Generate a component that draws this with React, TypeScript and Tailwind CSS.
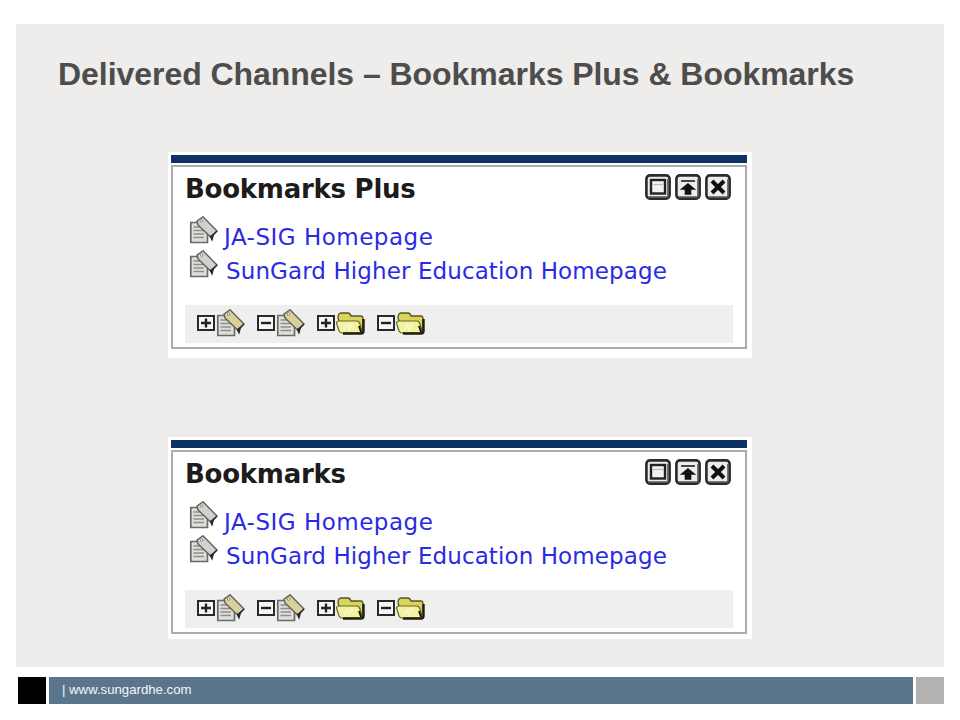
function WinButton({ kind }: { kind: "max" | "up" | "close" }) {
  return (
    <svg width="26" height="26" viewBox="0 0 26 26" className="block">
      <rect x="1.4" y="1.4" width="23.2" height="23.2" rx="3.5" fill="#ececec" stroke="#2a2a2a" strokeWidth="2.6" />
      <path d="M3 23H23V5" fill="none" stroke="#555" strokeWidth="1.6" />
      {kind === "max" && <><rect x="6" y="6" width="14" height="13.5" fill="#f1f1f1" stroke="#222" strokeWidth="2.4" /><path d="M8 10.5H18" stroke="#bbb" strokeWidth="1.2" /></>}
      {kind === "up" && <path d="M6 7H20M13 10L19 15H15.5V20H10.5V15H7Z" fill="#111" stroke="#111" strokeWidth="1.6" />}
      {kind === "close" && <path d="M7 7L19 19M19 7L7 19" fill="none" stroke="#111" strokeWidth="4" />}
    </svg>
  );
}

function BookmarkIcon({ tan = false }: { tan?: boolean }) {
  return (
    <svg width="30" height="28" viewBox="0 0 30 28" className="block">
      <path d="M2.8 6.5H12L19.5 13V26.5H2.8Z" fill="#dededa" stroke="#6a6a6a" strokeWidth="1.7" />
      <path d="M5.5 11H12M5.5 14.5H16M5.5 18H16M5.5 21.5H16" stroke="#8f8f8a" strokeWidth="1.3" />
      <path d="M9 5L15 0.8L29 15L23 21L21 19.5L10 9Z" fill={tan ? "#d9d09a" : "#d2d2cc"} stroke="#5f5f58" strokeWidth="1.4" />
      <path d="M29 15L25.5 18.5L24 24L22 20" fill="#2a2a2a" stroke="#2a2a2a" strokeWidth="1.2" />
      <circle cx="13.5" cy="5" r="1.3" fill="#fff" stroke="#666" strokeWidth="0.7" />
    </svg>
  );
}

function PlusMinus({ plus }: { plus: boolean }) {
  return (
    <svg width="18" height="16" viewBox="0 0 18 16" className="block">
      <rect x="1" y="1" width="16" height="14" fill="#f6f6f6" stroke="#2a2a2a" strokeWidth="2" />
      <path d={plus ? "M4 8H14M9 3.5V12.5" : "M4 8H14"} stroke="#222" strokeWidth="2.4" />
    </svg>
  );
}

function Folder() {
  return (
    <svg width="30" height="24" viewBox="0 0 30 24" className="block">
      <path d="M3 7Q3 2 6 2H13Q15 2 16 5H26Q28 5 28 8V20Q28 22 26 22H8Z" fill="#d9d45e" stroke="#55551c" strokeWidth="1.3" />
      <path d="M1.5 12Q1.5 10 4 10H22Q24 10 25 13L27 20Q27 22 25 22H7Q5 22 4 20Z" fill="#f3f1a2" stroke="#66661f" strokeWidth="1.2" />
      <path d="M8 22.5H26Q28.5 22.5 28.5 20V8" fill="none" stroke="#1f1f0c" strokeWidth="2.4" />
      <path d="M24 15L26 21" stroke="#111" strokeWidth="1.8" />
      <path d="M9 19L14 13M13 19L18 13" stroke="#fbfbd8" strokeWidth="1.4" />
    </svg>
  );
}

function LinkRow({ label, className }: { label: string; className: string }) {
  return (
    <div className="flex items-start h-[33.5px]">
      <BookmarkIcon />
      <span className={`text-[23px] leading-[34px] text-[#2a2ae6] mt-[4px] whitespace-nowrap ${className}`}>
        {label}
      </span>
    </div>
  );
}

function Portlet({ title, className }: { title: string; className: string }) {
  return (
    <div className={`bg-white w-[584px] ml-[152px] pt-[3px] pl-[3px] pr-[5px] ${className}`} style={{ fontFamily: '"DejaVu Sans", sans-serif' }}>
      <div className="h-[8px] bg-[#0b3263]" />
      <div className="mt-[2px] h-[184px] border-2 border-[#a9adad] px-[12px] flex flex-col">
        <div className="flex items-center justify-between h-[44px]">
          <span className="text-[26px] leading-none font-bold text-[#1c1c1c] tracking-[-0.25px]">{title}</span>
          <div className="flex gap-[4px] mr-[2px] -mt-[4px]">
            <WinButton kind="max" />
            <WinButton kind="up" />
            <WinButton kind="close" />
          </div>
        </div>
        <div className="pl-[3px] flex flex-col mt-[5px]">
          <LinkRow label="JA-SIG Homepage" className="ml-[6px] tracking-[0.5px]" />
          <LinkRow label="SunGard Higher Education Homepage" className="ml-[8px] tracking-[0.1px]" />
        </div>
        <div className="mt-[22px] h-[38px] bg-[#efefef] flex items-center pl-[12px] pb-[3px]">
          <PlusMinus plus />
          <BookmarkIcon tan />
          <div className="w-[12px]" />
          <PlusMinus plus={false} />
          <BookmarkIcon tan />
          <div className="w-[12px]" />
          <PlusMinus plus />
          <Folder />
          <div className="w-[12px]" />
          <PlusMinus plus={false} />
          <Folder />
        </div>
      </div>
    </div>
  );
}

export default function App() {
  return (
    <div className="w-[960px] h-[720px] bg-white overflow-hidden flex flex-col" style={{ fontFamily: '"Liberation Sans", Arial, sans-serif' }}>
      <div className="mt-[24px] mx-[16px] h-[643px] bg-[#eeedeb] flex flex-col">
        <h1 className="ml-[42px] mt-[30px] text-[32px] leading-[40px] font-bold text-[#4d4d4d] tracking-[-0.05px] whitespace-nowrap">
          Delivered Channels – Bookmarks Plus &amp; Bookmarks
        </h1>
        <Portlet title="Bookmarks Plus" className="mt-[58px] pb-[9px]" />
        <Portlet title="Bookmarks" className="mt-[79px] pb-[5px]" />
      </div>
      <div className="mt-[10px] h-[27px] flex ml-[18px] mr-[16px] gap-[3px]">
        <div className="w-[28px] bg-black" />
        <div className="flex-1 bg-[#5b768c] text-[#f4f6f8] text-[13.2px] leading-[25px] pl-[13px]">| www.sungardhe.com</div>
        <div className="w-[28px] bg-[#b2b2b2]" />
      </div>
    </div>
  );
}
